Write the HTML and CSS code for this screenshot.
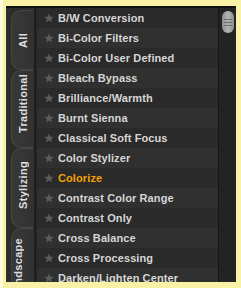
FILE: index.html
```html
<!DOCTYPE html>
<html lang="en">
<head>
    <meta charset="UTF-8">
    <title>Filters</title>
    <link rel="stylesheet" href="styles.css">
</head>
<body>
    <div class="frame">
        <div class="panel">
            <div class="tabs">
                <div class="tab tab-all"><span>All</span></div>
                <div class="tab tab-trad"><span>Traditional</span></div>
                <div class="tab tab-styl"><span>Stylizing</span></div>
                <div class="tab tab-land"><span>Landscape</span></div>
            </div>
            <div class="divider"></div>
            <ul class="list">
                <li><svg class="star" viewBox="0 0 10 10"><polygon points="5,0.3 6.2,3.7 9.8,3.8 7,6 8,9.6 5,7.5 2,9.6 3,6 0.2,3.8 3.8,3.7"/></svg>B/W Conversion</li>
                <li><svg class="star" viewBox="0 0 10 10"><polygon points="5,0.3 6.2,3.7 9.8,3.8 7,6 8,9.6 5,7.5 2,9.6 3,6 0.2,3.8 3.8,3.7"/></svg>Bi-Color Filters</li>
                <li><svg class="star" viewBox="0 0 10 10"><polygon points="5,0.3 6.2,3.7 9.8,3.8 7,6 8,9.6 5,7.5 2,9.6 3,6 0.2,3.8 3.8,3.7"/></svg>Bi-Color User Defined</li>
                <li><svg class="star" viewBox="0 0 10 10"><polygon points="5,0.3 6.2,3.7 9.8,3.8 7,6 8,9.6 5,7.5 2,9.6 3,6 0.2,3.8 3.8,3.7"/></svg>Bleach Bypass</li>
                <li><svg class="star" viewBox="0 0 10 10"><polygon points="5,0.3 6.2,3.7 9.8,3.8 7,6 8,9.6 5,7.5 2,9.6 3,6 0.2,3.8 3.8,3.7"/></svg>Brilliance/Warmth</li>
                <li><svg class="star" viewBox="0 0 10 10"><polygon points="5,0.3 6.2,3.7 9.8,3.8 7,6 8,9.6 5,7.5 2,9.6 3,6 0.2,3.8 3.8,3.7"/></svg>Burnt Sienna</li>
                <li><svg class="star" viewBox="0 0 10 10"><polygon points="5,0.3 6.2,3.7 9.8,3.8 7,6 8,9.6 5,7.5 2,9.6 3,6 0.2,3.8 3.8,3.7"/></svg>Classical Soft Focus</li>
                <li><svg class="star" viewBox="0 0 10 10"><polygon points="5,0.3 6.2,3.7 9.8,3.8 7,6 8,9.6 5,7.5 2,9.6 3,6 0.2,3.8 3.8,3.7"/></svg>Color Stylizer</li>
                <li class="selected"><svg class="star" viewBox="0 0 10 10"><polygon points="5,0.3 6.2,3.7 9.8,3.8 7,6 8,9.6 5,7.5 2,9.6 3,6 0.2,3.8 3.8,3.7"/></svg>Colorize</li>
                <li><svg class="star" viewBox="0 0 10 10"><polygon points="5,0.3 6.2,3.7 9.8,3.8 7,6 8,9.6 5,7.5 2,9.6 3,6 0.2,3.8 3.8,3.7"/></svg>Contrast Color Range</li>
                <li><svg class="star" viewBox="0 0 10 10"><polygon points="5,0.3 6.2,3.7 9.8,3.8 7,6 8,9.6 5,7.5 2,9.6 3,6 0.2,3.8 3.8,3.7"/></svg>Contrast Only</li>
                <li><svg class="star" viewBox="0 0 10 10"><polygon points="5,0.3 6.2,3.7 9.8,3.8 7,6 8,9.6 5,7.5 2,9.6 3,6 0.2,3.8 3.8,3.7"/></svg>Cross Balance</li>
                <li><svg class="star" viewBox="0 0 10 10"><polygon points="5,0.3 6.2,3.7 9.8,3.8 7,6 8,9.6 5,7.5 2,9.6 3,6 0.2,3.8 3.8,3.7"/></svg>Cross Processing</li>
                <li><svg class="star" viewBox="0 0 10 10"><polygon points="5,0.3 6.2,3.7 9.8,3.8 7,6 8,9.6 5,7.5 2,9.6 3,6 0.2,3.8 3.8,3.7"/></svg>Darken/Lighten Center</li>
            </ul>
            <div class="scroll">
                <div class="thumb"><i></i><i></i><i></i></div>
            </div>
        </div>
    </div>
</body>
</html>
```

FILE: styles.css
```css
body {
    margin: 0;
    background-color: #f9f1a5;
    font-family: 'Liberation Sans', Arial, sans-serif;
}

.frame {
    width: 241px;
    height: 288px;
    box-sizing: border-box;
    padding: 6px 5px 6px 3px;
    border-left: 3px solid #fdfbd9;
}

.panel {
    display: flex;
    height: 276px;
    border-top: 2px solid #111;
    box-sizing: border-box;
    background-color: #2a2a2a;
    overflow: hidden;
}

.tabs {
    width: 27px;
    display: flex;
    flex-direction: column;
    background-color: #2c2c2c;
    overflow: hidden;
}

.tab {
    margin-left: 5px;
    border: 1px solid #454545;
    border-right: none;
    border-radius: 10px 0 0 10px;
    background: linear-gradient(to right, #383838, #323232);
    display: flex;
    align-items: center;
    justify-content: center;
    flex-shrink: 0;
    box-sizing: border-box;
}

.tab span {
    writing-mode: vertical-rl;
    transform: rotate(180deg);
    color: #dedede;
    font-size: 11px;
    font-weight: bold;
    letter-spacing: 0.3px;
}

.tab-all { height: 60px; margin-top: 2px; }
.tab-trad { height: 78px; padding-bottom: 12px; }
.tab-styl { height: 80px; padding-bottom: 6px; }
.tab-land { height: 74px; justify-content: flex-start; padding-top: 6px; }

.divider {
    width: 4px;
    background: linear-gradient(to right, #3a3a3a, #161616 50%, #2c2c2c);
}

.list {
    flex: 1;
    margin: 0;
    padding: 0;
    list-style: none;
}

.list li {
    height: 20px;
    display: flex;
    align-items: center;
    color: #d6d6d6;
    font-size: 11px;
    font-weight: bold;
    letter-spacing: 0.1px;
    white-space: nowrap;
    background-color: #2a2a2a;
}

.list li:nth-child(even) {
    background-color: #303030;
}

.list li.selected {
    color: #f5a300;
}

.star {
    width: 10px;
    height: 10px;
    margin: 0 4px 0 7px;
    fill: #5c5c5c;
}

.scroll {
    width: 18px;
    background-color: #232323;
    border-left: 1px solid #161616;
    box-sizing: border-box;
    padding: 3px 0 0 3px;
}

.thumb {
    width: 12px;
    height: 22px;
    border-radius: 6px;
    background: linear-gradient(to right, #8c8c8c, #b4b4b4 50%, #8c8c8c);
    display: flex;
    flex-direction: column;
    align-items: center;
    justify-content: center;
    gap: 2px;
}

.thumb i {
    display: block;
    width: 8px;
    height: 1px;
    background-color: #6e6e6e;
}
```
